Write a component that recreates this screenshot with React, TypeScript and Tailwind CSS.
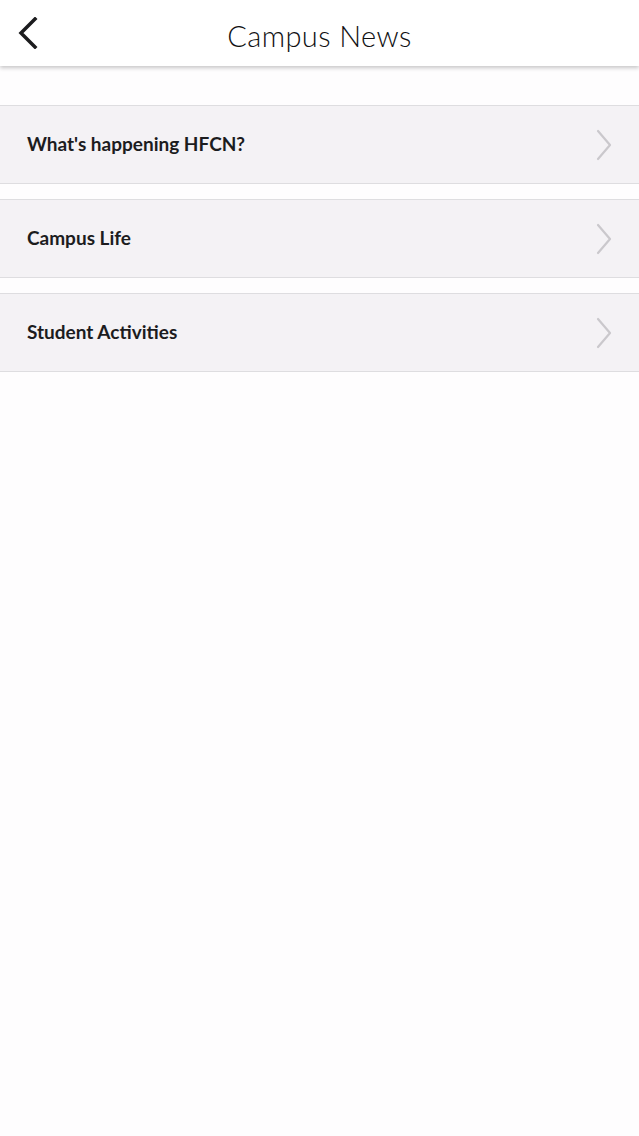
import React from "react";

const items = ["What's happening HFCN?", "Campus Life", "Student Activities"];

function Chevron() {
  return (
    <svg width="20" height="34" viewBox="0 0 20 34" fill="none">
      <path d="M4 3 L16 17 L4 31" stroke="#cac8cc" strokeWidth="2.2" strokeLinecap="round" strokeLinejoin="round" />
    </svg>
  );
}

export default function App() {
  return (
    <div className="min-h-[1136px] w-[639px] bg-[#fefdfe]" style={{ fontFamily: "Lato, 'Open Sans', sans-serif" }}>
      <div className="relative flex h-[66px] items-center justify-center bg-white shadow-[0_2px_4px_rgba(0,0,0,0.22)]">
        <div className="absolute left-[17px] top-[17px]">
          <svg width="22" height="32" viewBox="0 0 22 32" fill="none">
            <path d="M18 2 L4 16 L18 30" stroke="#1c1c1e" strokeWidth="3.5" strokeLinecap="square" />
          </svg>
        </div>
        <h1 className="pt-[5px] text-[29px] font-light tracking-[0.4px] text-[#111113]">Campus News</h1>
      </div>
      <div className="flex flex-col gap-[15px] pt-[39px]">
        {items.map((t) => (
          <div key={t} className="flex h-[79px] items-center justify-between border-y border-[#dedde0] bg-[#f4f2f5] pl-[27px] pr-[25px]">
            <span className="text-[19px] font-bold text-[#1c1c1e]">{t}</span>
            <Chevron />
          </div>
        ))}
      </div>
    </div>
  );
}
